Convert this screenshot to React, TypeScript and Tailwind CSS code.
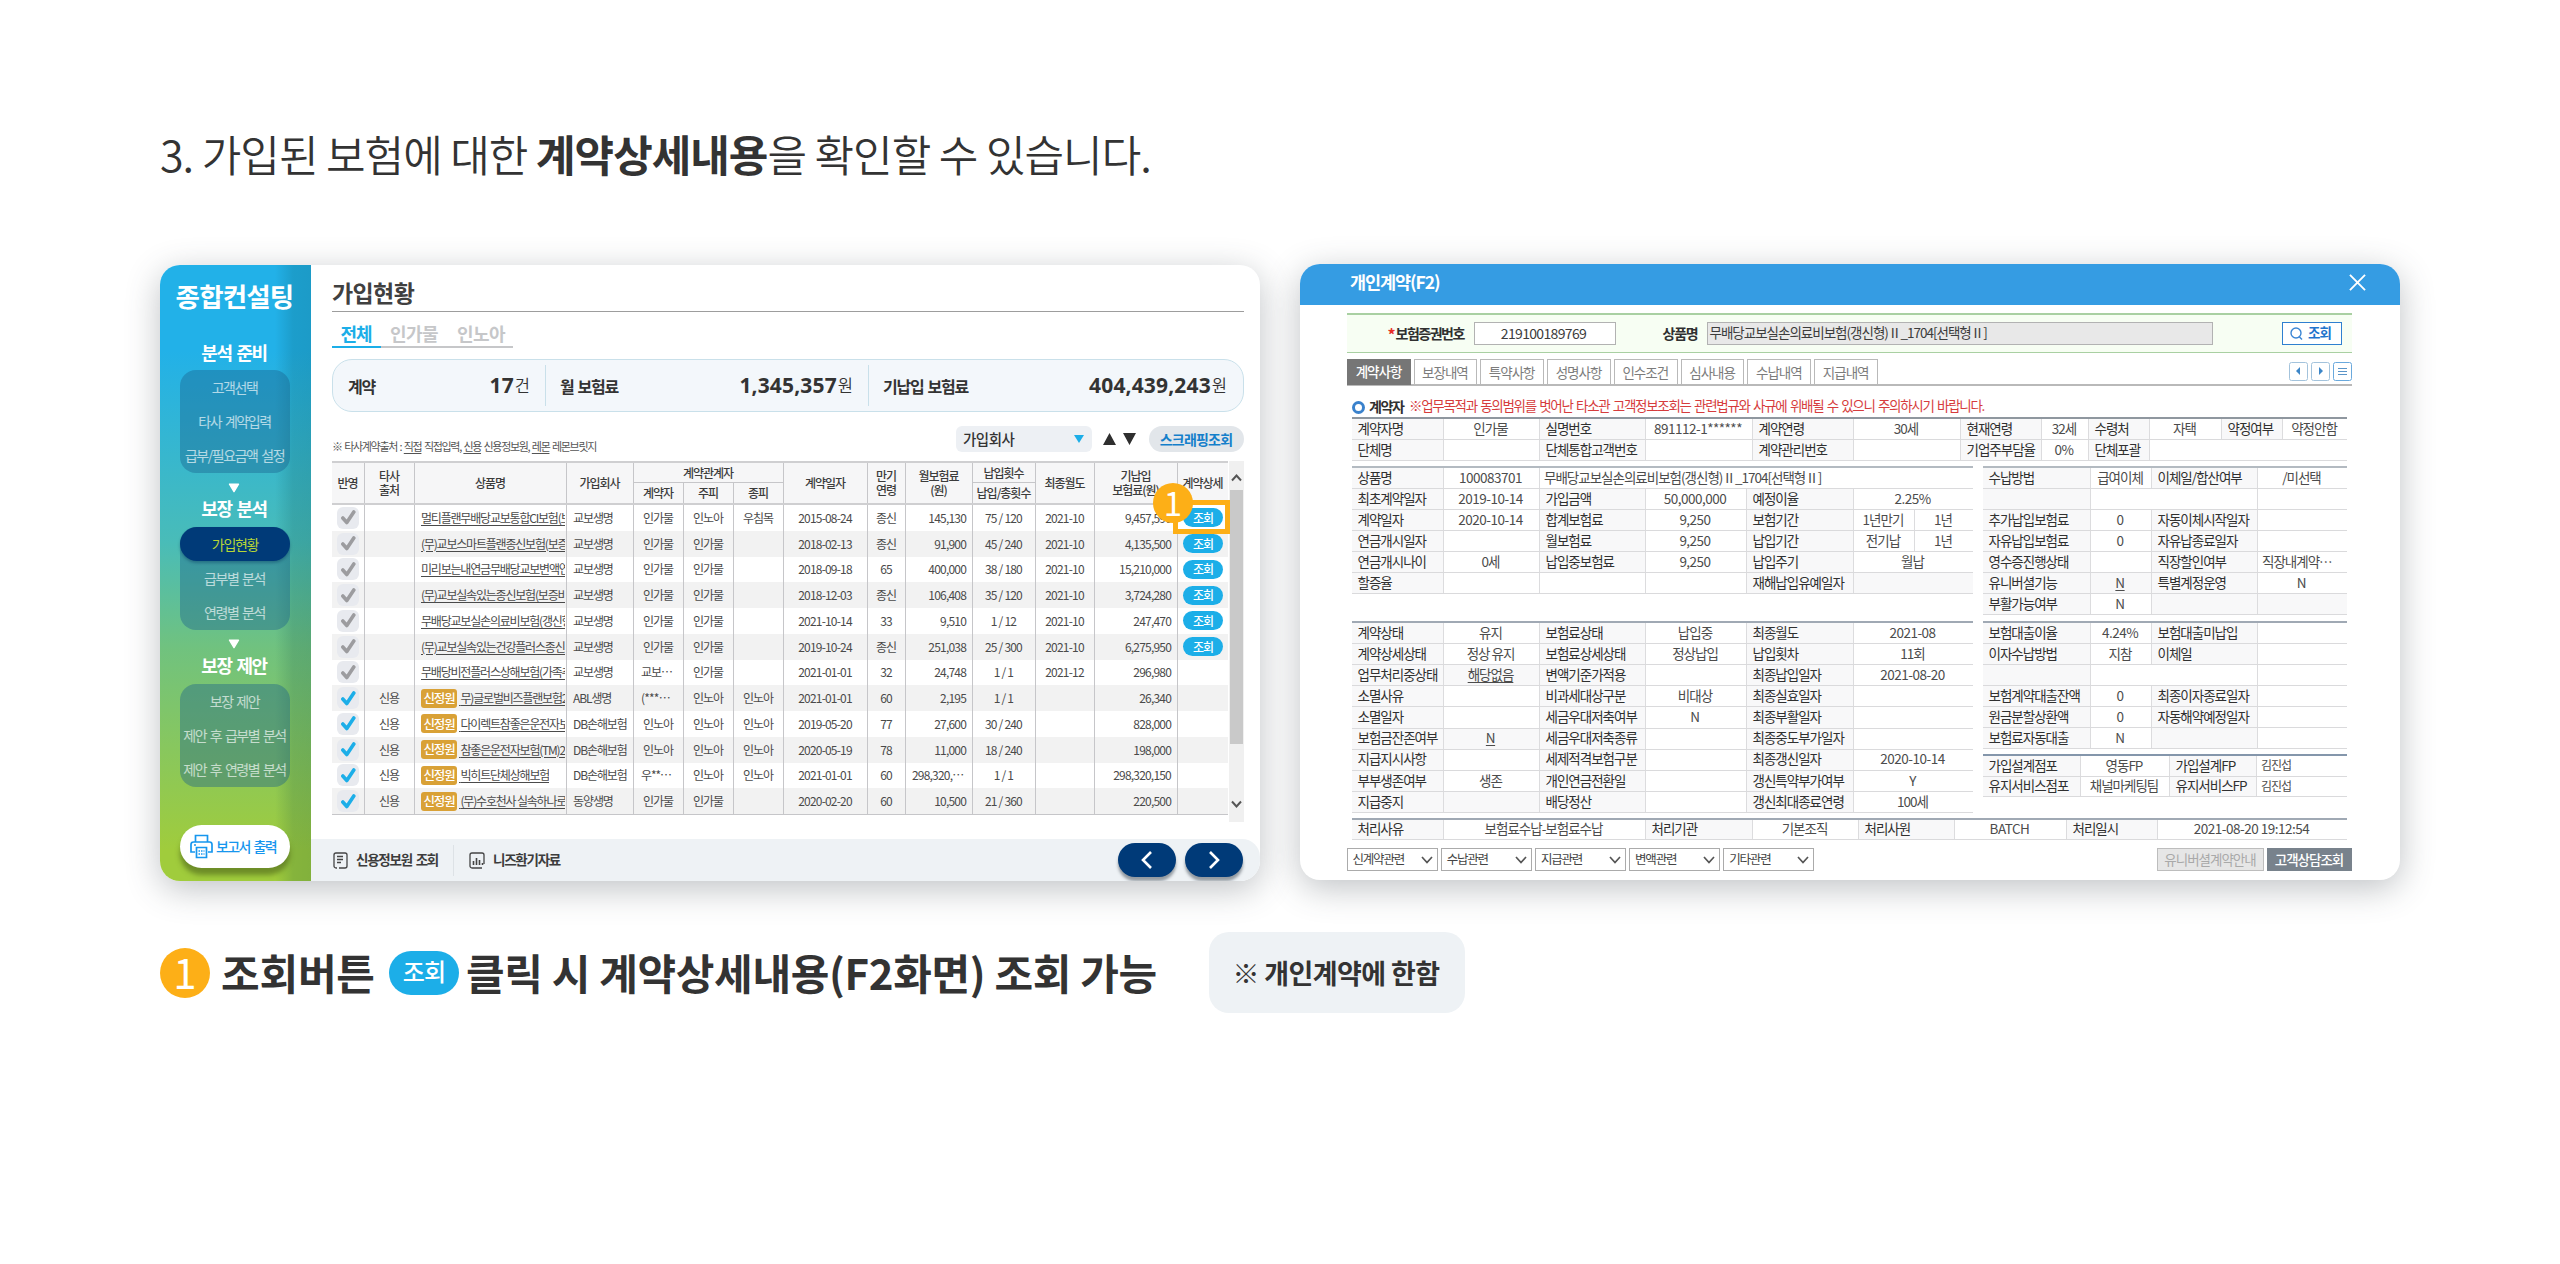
import React from "react";

const FONT = "font-['Noto_Sans_CJK_KR',sans-serif]";
const hasHangul = (s: string) => /[가-힣]/.test(s);

/* ---------- left panel ---------- */

function MenuGroup({ items, active }: { items: string[]; active?: number }) {
  return (
    <div className="mr-[21px] ml-5 grid h-[103px] grid-rows-3 overflow-visible rounded-[16px] bg-[#1a5f8c]/40 pr-[1px] [word-spacing:2px]">
      {items.map((t, i) =>
        i === active ? (
          <div key={t} className="-mr-[1px] flex items-center justify-center rounded-full bg-[#003a78] text-[14px] tracking-[-1.3px] text-[#b7d636] shadow-[0_2px_3px_rgba(0,40,80,.35)]">
            {t}
          </div>
        ) : (
          <div key={t} className="flex items-center justify-center whitespace-nowrap text-[14px] tracking-[-1.45px] text-white/65">
            {t}
          </div>
        )
      )}
    </div>
  );
}

const Down = () => (
  <svg className="mx-auto" width="12" height="10" viewBox="0 0 12 10">
    <path d="M1.5 1.2h9L6 8.6z" fill="#fff" stroke="#fff" strokeWidth="1.4" strokeLinejoin="round" />
  </svg>
);

function GroupTitle({ children }: { children: React.ReactNode }) {
  return <div className="flex h-[22px] items-center justify-center pr-[3px] text-[18px] font-bold tracking-[-1.5px] text-white [word-spacing:2.5px]">{children}</div>;
}

function Sidebar() {
  return (
    <aside className="relative flex w-[151px] shrink-0 flex-col bg-[linear-gradient(180deg,#22b1e8_0%,#22b1e8_14%,#49bcb8_45%,#70c27f_62%,#a0cc3c_95%)]">
      <div className="absolute inset-y-0 right-0 w-[36px] bg-[linear-gradient(90deg,rgba(0,60,60,0)_0%,rgba(0,60,60,.17)_50%,rgba(0,60,60,.19)_100%)]" />
      <div className="relative flex h-full flex-col">
        <div className="mt-[17px] flex h-[28px] items-center justify-center pr-[2px] text-[26.5px] font-bold tracking-[-0.8px] whitespace-nowrap text-white">종합컨설팅</div>
        <div className="mt-[31px]"><GroupTitle>분석 준비</GroupTitle></div>
        <div className="mt-[7px]"><MenuGroup items={["고객선택", "타사 계약입력", "급부/필요금액 설정"]} /></div>
        <div className="mt-[10px] h-[10px] pr-[3px]"><Down /></div>
        <div className="mt-[4px]"><GroupTitle>보장 분석</GroupTitle></div>
        <div className="mt-[8px]"><MenuGroup active={0} items={["가입현황", "급부별 분석", "연령별 분석"]} /></div>
        <div className="mt-[9px] h-[10px] pr-[3px]"><Down /></div>
        <div className="mt-[5px]"><GroupTitle>보장 제안</GroupTitle></div>
        <div className="mt-[8px]"><MenuGroup items={["보장 제안", "제안 후 급부별 분석", "제안 후 연령별 분석"]} /></div>
        <div className="mt-[38px] mr-[21px] ml-5 flex h-[43px] items-center rounded-full bg-white pl-[10px] text-[14px] font-medium tracking-[-1.6px] whitespace-nowrap text-[#1696ee] shadow-[0_7px_5px_rgba(60,80,20,.5)] [word-spacing:2px]">
          <svg width="23" height="25" viewBox="0 0 23 25" fill="none" stroke="#1696ee" strokeWidth="1.7" className="mr-[3px] shrink-0">
            <path d="M5.500 8V1.500h12V8M5 18H1V10.500a2.500 2.500 0 0 1 2.500-2.500h16a2.500 2.500 0 0 1 2.500 2.500V18h-4M6.500 13.500h10v10h-10zM4 11h2" />
            <path d="M8.500 17h6M8.500 20h6" strokeDasharray="1.500 1" />
          </svg>
          보고서 출력
        </div>
      </div>
    </aside>
  );
}

type Contract = {
  on?: boolean; badge?: boolean; name: string; co: string; a: string; b: string; c?: string;
  date: string; age: string; fee: string; cnt: string; last?: string; paid: string; btn?: boolean;
};

const KB = "교보생명";
const contracts: Contract[] = [
  { name: "멀티플랜무배당교보통합CI보험(보", co: KB, a: "인가물", b: "인노아", c: "우침목", date: "2015-08-24", age: "종신", fee: "145,130", cnt: "75 / 120", last: "2021-10", paid: "9,457,590", btn: true },
  { name: "(무)교보스마트플랜종신보험(보증", co: KB, a: "인가물", b: "인가물", date: "2018-02-13", age: "종신", fee: "91,900", cnt: "45 / 240", last: "2021-10", paid: "4,135,500", btn: true },
  { name: "미리보는내연금무배당교보변액연", co: KB, a: "인가물", b: "인가물", date: "2018-09-18", age: "65", fee: "400,000", cnt: "38 / 180", last: "2021-10", paid: "15,210,000", btn: true },
  { name: "(무)교보실속있는종신보험(보증비", co: KB, a: "인가물", b: "인가물", date: "2018-12-03", age: "종신", fee: "106,408", cnt: "35 / 120", last: "2021-10", paid: "3,724,280", btn: true },
  { name: "무배당교보실손의료비보험(갱신형", co: KB, a: "인가물", b: "인가물", date: "2021-10-14", age: "33", fee: "9,510", cnt: "1 / 12", last: "2021-10", paid: "247,470", btn: true },
  { name: "(무)교보실속있는건강플러스종신보", co: KB, a: "인가물", b: "인가물", date: "2019-10-24", age: "종신", fee: "251,038", cnt: "25 / 300", last: "2021-10", paid: "6,275,950", btn: true },
  { name: "무배당비전플러스상해보험(가족추", co: KB, a: "교보…", b: "인가물", date: "2021-01-01", age: "32", fee: "24,748", cnt: "1 / 1", last: "2021-12", paid: "296,980" },
  { on: true, badge: true, name: "무)글로벌비즈플랜보험2", co: "ABL생명", a: "(***…", b: "인노아", c: "인노아", date: "2021-01-01", age: "60", fee: "2,195", cnt: "1 / 1", paid: "26,340" },
  { on: true, badge: true, name: "다이렉트참좋은운전자보", co: "DB손해보험", a: "인노아", b: "인노아", c: "인노아", date: "2019-05-20", age: "77", fee: "27,600", cnt: "30 / 240", paid: "828,000" },
  { on: true, badge: true, name: "참좋은운전자보험(TM)2", co: "DB손해보험", a: "인노아", b: "인노아", c: "인노아", date: "2020-05-19", age: "78", fee: "11,000", cnt: "18 / 240", paid: "198,000" },
  { on: true, badge: true, name: "빅히트단체상해보험", co: "DB손해보험", a: "우**…", b: "인노아", c: "인노아", date: "2021-01-01", age: "60", fee: "298,320,…", cnt: "1 / 1", paid: "298,320,150" },
  { on: true, badge: true, name: "(무)수호천사 실속하나로", co: "동양생명", a: "인가물", b: "인가물", date: "2020-02-20", age: "60", fee: "10,500", cnt: "21 / 360", paid: "220,500" },
];

const GRID = "grid grid-cols-[32px_50px_152px_67px_50px_50px_50px_84px_38px_67px_63px_59px_83px_51px]";

function Td({ t = "", cls = "justify-center pr-px" }: { t?: string; cls?: string }) {
  return (
    <div className={`flex items-center border-l border-[#c6c6c9] whitespace-nowrap ${cls} ${hasHangul(t) ? "tracking-[-1.1px]" : "tracking-[-0.8px]"}`}>
      {t}
    </div>
  );
}

function Th({ children, cls = "row-span-2" }: { children?: React.ReactNode; cls?: string }) {
  return <div className={`flex items-center justify-center border-l border-[#c6c6c9] pr-px text-center whitespace-nowrap ${cls}`}>{children}</div>;
}

function Check({ on }: { on?: boolean }) {
  return (
    <div className="flex items-center justify-center">
      <div className="flex size-[22px] items-center justify-center rounded-[6px] bg-[#e8eaef]">
        <svg width="15" height="15" viewBox="0 0 15 15" fill="none" stroke={on ? "#1caee8" : "#9c9c9f"} strokeWidth="3.600">
          <path d="M1.800 8 5.800 12.500 12.800 2" strokeLinejoin="round" strokeLinecap="round" />
        </svg>
      </div>
    </div>
  );
}

function ContractTable() {
  return (
    <div className="flex h-[361px]">
      <div className="w-[896px] text-[12px] leading-none text-[#4a4a4a]">
        <div className={`${GRID} h-[44px] grid-rows-2 border-t-2 border-b-2 border-[#cfcfd1] bg-[#f6f6f7] text-[12px] leading-[14px] font-medium tracking-[-1px] text-[#3c3c3c]`}>
          <Th cls="row-span-2 border-l-0">반영</Th>
          <Th>타사<br />출처</Th>
          <Th>상품명</Th>
          <Th>가입회사</Th>
          <Th cls="col-span-3 border-b">계약관계자</Th>
          <Th>계약일자</Th>
          <Th>만기<br />연령</Th>
          <Th>월보험료<br />(원)</Th>
          <Th cls="border-b">납입횟수</Th>
          <Th>최종월도</Th>
          <Th>기납입<br />보험료(원)</Th>
          <Th>계약상세</Th>
          <Th cls="">계약자</Th>
          <Th cls="">주피</Th>
          <Th cls="">종피</Th>
          <Th cls="">납입/총횟수</Th>
        </div>
        <div className="grid h-[310px] auto-rows-fr border-b border-[#c6c6c9]">
          {contracts.map((r, i) => (
            <div key={i} className={`${GRID} ${i % 2 ? "bg-[#f2f2f2]" : "bg-white"}`}>
              <Check on={r.on} />
              <Td t={r.on ? "신용" : ""} />
              <div className="flex items-center overflow-hidden border-l border-[#c6c6c9] pr-px pl-[6px] tracking-[-1.2px] whitespace-nowrap">
                {r.badge && <span className="mr-[2px] flex h-[19px] w-[36px] shrink-0 items-center justify-center rounded-[3px] bg-[#d9a136] text-[12.5px] font-medium text-white">신정원</span>}
                <span className="overflow-hidden pt-1 pb-1 underline underline-offset-2">{r.badge && "\u00a0"}{r.name}</span>
              </div>
              <Td t={r.co} cls="pl-[6px]" />
              <Td t={r.a} cls={r.a.endsWith("…") ? "pl-[7px]" : "justify-center pr-px"} />
              <Td t={r.b} />
              <Td t={r.c} />
              <Td t={r.date} />
              <Td t={r.age} />
              <Td t={r.fee} cls={r.fee.endsWith("…") ? "pl-[6px]" : "justify-end pr-[6px]"} />
              <Td t={r.cnt} />
              <Td t={r.last} />
              <Td t={r.paid} cls="justify-end pr-[6px]" />
              <div className="relative flex items-center justify-center border-l border-[#c6c6c9]">
                {r.btn && <span className="flex h-[19px] w-[40px] items-center justify-center rounded-full bg-[#1caee8] text-[12px] font-medium tracking-[-1px] text-white">조회</span>}
                {i === 0 && (
                  <>
                    <span className="absolute -top-[5px] -left-[5px] z-10 h-[34px] w-[57px] border-[5px] border-[#fdaf17]" />
                    <span className="absolute -top-[22px] -left-[25px] z-20 flex size-[40px] items-center justify-center rounded-full bg-[#fdaf17] pb-[2px] text-[33px] text-white">1</span>
                  </>
                )}
              </div>
            </div>
          ))}
        </div>
      </div>
      <div className="ml-[1px] flex w-[15px] flex-col items-center bg-[#f0f0f0]">
        <svg className="mt-[13px]" width="11" height="8" viewBox="0 0 11 8" fill="none" stroke="#555" strokeWidth="2"><path d="M1 6.500 5.500 1.500 10 6.500" /></svg>
        <div className="mt-[8px] h-[254px] w-[13px] bg-[#c9c9c9]" />
        <svg className="mt-[56px]" width="11" height="8" viewBox="0 0 11 8" fill="none" stroke="#555" strokeWidth="2"><path d="M1 1.500 5.500 6.500 10 1.500" /></svg>
      </div>
    </div>
  );
}

function Stat({ label, value, unit, cls }: { label: string; value: string; unit: string; cls: string }) {
  return (
    <div className={`flex h-[41px] items-center justify-between ${cls}`}>
      <span className="text-[16px] font-bold tracking-[-1.2px] text-[#333] [word-spacing:1.5px]">{label}</span>
      <span className="flex items-center text-[#333]">
        <span className="font-['Noto_Sans',sans-serif] text-[21px] font-bold tracking-[0.15px]">{value}</span>
        <span className="ml-px text-[16.5px] font-[350]">{unit}</span>
      </span>
    </div>
  );
}

function StatusPanel() {
  return (
    <section className="flex h-[616px] w-[1100px] overflow-hidden rounded-[20px] bg-white shadow-[0_8px_34px_rgba(60,70,80,.33)]">
      <Sidebar />
      <div className="flex flex-1 flex-col">
        <div className="ml-[21px] w-[912px]">
          <div className="flex h-[47px] items-center border-b border-[#9d9d9d] pt-[11px] text-[23px] leading-none font-bold tracking-[-0.6px] text-[#404040]"><span className="-mt-[3px]">가입현황</span></div>
          <div className="mt-[8px] flex h-[28px] text-[18px] leading-none font-bold tracking-[-1px] text-[#c6c7c9]">
            <div className="flex w-[49px] items-center justify-center border-b-2 border-[#1caee8] pr-[1px] text-[#1caee8]">전체</div>
            <div className="flex w-[132px] items-center justify-between border-b-2 border-[#c6c7c9] pr-[8px] pl-[9px] text-[18px] tracking-[-0.6px]"><span>인가물</span><span>인노아</span></div>
          </div>
          <div className="mt-[11px] flex h-[53px] items-center rounded-[20px] border border-[#c9e0ea] bg-[#f3f7fb] leading-none">
            <Stat label="계약" value="17" unit="건" cls="w-[212px] pl-[15px] pr-[15px]" />
            <Stat label="월 보험료" value="1,345,357" unit="원" cls="w-[323px] border-l border-[#c9e0ea] pl-[14px] pr-[15px]" />
            <Stat label="기납입 보험료" value="404,439,243" unit="원" cls="flex-1 border-l border-[#c9e0ea] pl-[14px] pr-[16px]" />
          </div>
          <div className="mt-[14px] flex h-[26px] items-center leading-none">
            <div className="mt-[14px] text-[11px] tracking-[-1.3px] whitespace-nowrap text-[#555] [word-spacing:1.3px]">※ 타사계약출처 : <u className="underline-offset-2">직접</u> 직접입력, <u className="underline-offset-2">신용</u> 신용정보원, <u className="underline-offset-2">레몬</u> 레몬브릿지</div>
            <div className="ml-auto flex h-full w-[136px] items-center justify-between rounded-[6px] bg-[#edf0f4] pr-[8px] pl-[7px] text-[14.5px] font-medium tracking-[-0.5px] text-[#333]">
              가입회사
              <svg width="10" height="8"><path d="M0 0h10L5 8z" fill="#1caee8" /></svg>
            </div>
            <svg className="ml-[11px]" width="33" height="12"><path d="M0 12h13L6.500 0zM20 0h13l-6.500 12z" fill="#2f2f2f" /></svg>
            <div className="ml-[13px] flex h-full w-[95px] items-center justify-center rounded-full bg-[#e2e6ea] pr-[1px] text-[14px] font-bold tracking-[-0.8px] text-[#147fca]">스크래핑조회</div>
          </div>
          <div className="mt-[9px]"><ContractTable /></div>
        </div>
        <div className="mt-auto flex h-[42px] items-center rounded-tr-[18px] bg-[#eef2f5] pl-[22px] text-[13.5px] leading-none font-bold tracking-[-1.25px] text-[#3c3c3c] [word-spacing:2px]">
          <svg width="15" height="17" viewBox="0 0 15 17" fill="none" stroke="#444" strokeWidth="1.300" className="mr-[8px]">
            <path d="M4 16H3a2 2 0 0 1-2-2V3a2 2 0 0 1 2-2h9a2 2 0 0 1 2 2v11a2 2 0 0 1-2 2H6M4 4.500h6M4 7.500h6M4 10.500h4" />
          </svg>
          <span className="w-[97px] whitespace-nowrap">신용정보원 조회</span>
          <span className="h-[31px] w-px bg-[#dde2e6]" />
          <svg width="17" height="17" viewBox="0 0 17 17" fill="none" stroke="#444" strokeWidth="1.300" className="mr-[7px] ml-[15px]">
            <path d="M13 16H3a2 2 0 0 1-2-2V3a2 2 0 0 1 2-2h10a2 2 0 0 1 2 2v9" />
            <path d="M4.500 13V9M7.500 13V6M10.500 13V8M13.500 13V11" strokeWidth="1.600" />
          </svg>
          니즈환기자료
          <div className="ml-auto flex gap-[9px] pr-[17px]">
            {["M10 1 2 9l8 8", "M2 1l8 8-8 8"].map((d) => (
              <span key={d} className="flex h-[34px] w-[58px] items-center justify-center rounded-full bg-[#003a78] shadow-[0_4px_3px_rgba(60,70,80,.5)]">
                <svg width="12" height="18" viewBox="0 0 12 18" fill="none" stroke="#fff" strokeWidth="2.600"><path d={d} /></svg>
              </span>
            ))}
          </div>
        </div>
      </div>
    </section>
  );
}

/* ---------- right panel ---------- */

type CellSpec = { t: string; s?: number; l?: boolean; u?: boolean; left?: boolean; sm?: boolean };
type Cell = string | CellSpec;
const SPAN: Record<number, string> = { 1: "", 2: "col-span-2", 3: "col-span-3", 4: "col-span-4", 5: "col-span-5" };

/* Strings that begin with "#" are label cells. */
function Rows({ cols, rows, cls }: { cols: string; rows: Cell[][]; cls: string }) {
  return (
    <div className={`grid auto-rows-fr border-t-2 text-[13.5px] leading-none text-[#4c4c4c] ${cls}`}>
      {rows.map((r, i) => (
        <div key={i} className={`grid border-b border-[#dadadc] ${cols}`}>
          {r.map((c, j) => {
            const label = typeof c === "string" && c.startsWith("#");
            const cell: CellSpec = typeof c === "string" ? { t: label ? c.slice(1) : c } : c;
            return (
              <div
                key={j}
                className={`flex items-center pb-px whitespace-nowrap ${j ? "border-l border-[#dcdcde]" : ""} ${SPAN[cell.s ?? 1]} ${label ? "bg-[#f8f8f9] pl-[5.5px] text-[#303030]" : cell.left ? "pl-[4px]" : "justify-center pr-[2px]"} ${cell.l ? "bg-[#f8f8f9]" : ""} ${cell.u ? "underline underline-offset-2" : ""} ${cell.sm ? "text-[12px]" : ""} ${hasHangul(cell.t) ? "tracking-[-1px]" : "tracking-[-0.5px]"}`}
              >
                {cell.t}
              </div>
            );
          })}
        </div>
      ))}
    </div>
  );
}

const PRODUCT = "무배당교보실손의료비보험(갱신형)Ⅱ_1704[선택형Ⅱ]";
const W_LEFT = "grid-cols-[91px_96px_106px_101px_107px_61px_59px]";
const W_RIGHT = "grid-cols-[107px_61px_106px_90px]";
const e2: Cell = { t: "", s: 2 };
const v2 = (t: string): Cell => ({ t, s: 2 });

const person: Cell[][] = [
  ["#계약자명", "인가물", "#실명번호", "891112-1******", "#계약연령", "30세", "#현재연령", "32세", "#수령처", "자택", "#약정여부", "약정안함"],
  ["#단체명", "", "#단체통합고객번호", "", "#계약관리번호", "", "#기업주부담율", "0%", "#단체포괄", { t: "", s: 3 }],
];
const product: Cell[][] = [
  ["#상품명", "100083701", { t: PRODUCT, s: 5, left: true }],
  ["#최초계약일자", "2019-10-14", "#가입금액", "50,000,000", "#예정이율", v2("2.25%")],
  ["#계약일자", "2020-10-14", "#합계보험료", "9,250", "#보험기간", "1년만기", "1년"],
  ["#연금개시일자", "", "#월보험료", "9,250", "#납입기간", "전기납", "1년"],
  ["#연금개시나이", "0세", "#납입중보험료", "9,250", "#납입주기", v2("월납")],
  ["#할증율", "", "", "", "#재해납입유예일자", { t: "", s: 2, l: true }],
];
const payment: Cell[][] = [
  ["#수납방법", "급여이체", "#이체일/합산여부", "/미선택"],
  ["#", e2, ""],
  ["#추가납입보험료", "0", "#자동이체시작일자", ""],
  ["#자유납입보험료", "0", "#자유납종료일자", ""],
  ["#영수증진행상태", "", "#직장할인여부", { t: "직장내계약…", left: true }],
  ["#유니버셜기능", { t: "N", u: true, l: true }, "#특별계정운영", "N"],
  ["#부활가능여부", "N", "#", "#"],
];
const state: Cell[][] = [
  ["#계약상태", "유지", "#보험료상태", "납입중", "#최종월도", v2("2021-08")],
  ["#계약상세상태", "정상 유지", "#보험료상세상태", "정상납입", "#납입횟차", v2("11회")],
  ["#업무처리중상태", { t: "해당없음", u: true, l: true }, "#변액기준가적용", "", "#최종납입일자", v2("2021-08-20")],
  ["#소멸사유", "", "#비과세대상구분", "비대상", "#최종실효일자", e2],
  ["#소멸일자", "", "#세금우대저축여부", "N", "#최종부활일자", e2],
  ["#보험금잔존여부", { t: "N", u: true, l: true }, "#세금우대저축종류", "", "#최종중도부가일자", e2],
  ["#지급지시사항", "", "#세제적격보험구분", "", "#최종갱신일자", v2("2020-10-14")],
  ["#부부생존여부", "생존", "#개인연금전환일", "", "#갱신특약부가여부", v2("Y")],
  ["#지급중지", "#", "#배당정산", "", "#갱신최대종료연령", v2("100세")],
];
const loan: Cell[][] = [
  ["#보험대출이율", "4.24%", "#보험대출미납입", ""],
  ["#이자수납방법", "지참", "#이체일", ""],
  ["#", e2, ""],
  ["#보험계약대출잔액", "0", "#최종이자종료일자", ""],
  ["#원금분할상환액", "0", "#자동해약예정일자", ""],
  ["#보험료자동대출", "N", "#", ""],
];
const planner: Cell[][] = [
  ["#가입설계점포", "영동FP", "#가입설계FP", { t: "김진섭", left: true, sm: true }],
  ["#유지서비스점포", "채널마케팅팀", "#유지서비스FP", { t: "김진섭", left: true, sm: true }],
];
const process: Cell[][] = [
  ["#처리사유", "보험료수납-보험료수납", "#처리기관", "기본조직", "#처리사원", "BATCH", "#처리일시", "2021-08-20 19:12:54"],
];

function DetailPanel() {
  return (
    <section className="flex h-[616px] w-[1100px] flex-col overflow-hidden rounded-[20px] bg-white leading-none shadow-[0_8px_34px_rgba(60,70,80,.33)]">
      <div className="flex h-[41px] shrink-0 items-center justify-between bg-[#359ce3] pr-[34px] pb-[5px] pl-[50px] text-[17.5px] font-bold tracking-[-1.1px] text-white">
        개인계약(F2)
        <svg width="17" height="17" viewBox="0 0 18 18" stroke="#fff" strokeWidth="2"><path d="M1 1l16 16M17 1 1 17" /></svg>
      </div>
      <div className="ml-[46.5px] w-[1005px]">
        <div className="mt-[8px] flex h-[40px] items-center border-t-2 border-b border-[#a9d0a2] bg-[#f7fef3] text-[13.5px] tracking-[-1px] text-[#3c3c3c]">
          <span className="ml-[41px] w-[8px] text-[16px] font-bold text-[#e8302a]">*</span>
          <span className="w-[78px] pb-px text-[14px] font-bold tracking-[-1.5px] text-[#303030]">보험증권번호</span>
          <span className="flex h-[23px] w-[142px] items-center justify-center border border-[#b2b2b2] bg-white pr-[2px] pb-px text-[14px] tracking-[-0.65px]">219100189769</span>
          <span className="ml-[47px] w-[44px] pb-px text-[14px] font-bold tracking-[-1.2px] text-[#303030]">상품명</span>
          <span className="flex h-[23px] w-[506px] items-center border border-[#b2b2b2] bg-[#e8e8e8] pb-px pl-[2px]">{PRODUCT}</span>
          <span className="mr-[10px] ml-auto flex h-[23px] w-[60px] items-center justify-center gap-[5px] border border-[#2f80d0] bg-white pr-[2px] font-bold text-[#1f74cc]">
            <svg width="13" height="13" viewBox="0 0 13 13" fill="none" stroke="#3c86d4" strokeWidth="1.400"><circle cx="6" cy="6" r="5" /><path d="M9 9.500l3 3" /></svg>
            <span className="pb-px">조회</span>
          </span>
        </div>
        <div className="mt-[6px] flex h-[27px] items-start gap-[3px] border-b-2 border-[#b9b9b9] text-[13.5px] tracking-[-1px]">
          <div className="flex h-[26px] w-[64px] items-center justify-center bg-[#767676] font-medium text-white">계약사항</div>
          {["보장내역", "특약사항", "성명사항", "인수조건", "심사내용", "수납내역", "지급내역"].map((t) => (
            <div key={t} className="flex h-[26px] w-[63.8px] items-center justify-center border border-b-0 border-[#b9b9b9] pr-px text-[#7c7c7c]">{t}</div>
          ))}
          <div className="mt-[3px] ml-auto flex gap-[3px]">
            {["M11 5v8L7 9z", "M8 5v8l4-4z", ""].map((d, i) => (
              <svg key={i} width="19" height="19" viewBox="0 0 19 19" fill="none">
                <rect x=".5" y=".5" width="18" height="18" rx="2" stroke={i === 2 ? "#6aa9dd" : "#a3c3dc"} />
                {d ? <path d={d} fill="#3c86c8" /> : <path d="M5 6.500h9M5 9.500h9M5 12.500h9" stroke="#5b95c8" strokeWidth="1.200" />}
              </svg>
            ))}
          </div>
        </div>
        <div className="flex h-[31px] items-center pt-[8px] pl-[5.5px] text-[13.5px]">
          <span className="mt-[4px] size-[13px] rounded-full border-[3.5px] border-[#3a82cc]" />
          <span className="ml-[4px] w-[40px] text-[14px] font-bold tracking-[-1.4px] text-[#303030]">계약자</span>
          <span className="tracking-[-1.3px] whitespace-nowrap text-[#d63c3c] [word-spacing:1.7px]">※업무목적과 동의범위를 벗어난 타소관 고객정보조회는 관련법규와 사규에 위배될 수 있으니 주의하시기 바랍니다.</span>
        </div>
        <div className="ml-[5.5px] w-[995px]">
          <Rows cls="h-[44px] border-[#8f979f]" cols="grid-cols-[91px_96px_106px_107px_101px_107px_81px_47px_61px_72px_61px_65px]" rows={person} />
          <div className="mt-[5px] flex items-start justify-between">
            <div className="w-[621px]">
              <Rows cls="h-[128px] border-[#b3bac1]" cols={W_LEFT} rows={product} />
              <div className="mt-[27px]"><Rows cls="h-[192px] border-[#a0a9b4]" cols={W_LEFT} rows={state} /></div>
            </div>
            <div className="w-[364px]">
              <Rows cls="h-[149px] border-[#b3bac1]" cols={W_RIGHT} rows={payment} />
              <div className="mt-[6px]"><Rows cls="h-[128px] border-[#a0a9b4]" cols={W_RIGHT} rows={loan} /></div>
              <div className="mt-[5px]"><Rows cls="h-[43px] border-[#8496ab]" cols="grid-cols-[97px_89px_87px_91px]" rows={planner} /></div>
            </div>
          </div>
          <div className="mt-[5px]"><Rows cls="h-[22px] border-[#a0a9b4]" cols="grid-cols-[91px_202px_107px_106px_96px_112px_91px_190px]" rows={process} /></div>
        </div>
        <div className="mt-[8px] flex h-[23px] gap-[3px] text-[12.5px] tracking-[-1.2px] text-[#444]">
          {["신계약관련", "수납관련", "지급관련", "변액관련", "기타관련"].map((t) => (
            <div key={t} className="flex w-[91.2px] items-center justify-between border border-[#ababab] pr-[4px] pl-[5px]">
              {t}
              <svg width="12" height="8" viewBox="0 0 12 8" fill="none" stroke="#555" strokeWidth="1.700"><path d="M1 1l5 5.500L11 1" /></svg>
            </div>
          ))}
          <div className="ml-auto flex w-[107px] items-center justify-center border border-[#bdbdbd] bg-[#e6e6e6] text-[13.500px] tracking-[-1px] text-[#a9a9a9]">유니버셜계약안내</div>
          <div className="flex w-[85px] items-center justify-center bg-[#78828c] text-[13.500px] font-medium tracking-[-1px] text-white">고객상담조회</div>
        </div>
      </div>
    </section>
  );
}

export default function App() {
  return (
    <main className={`h-[1264px] w-[2560px] overflow-hidden bg-white pl-[160px] ${FONT} text-[#333]`}>
      <h1 className="flex h-[264px] items-start pt-[128px] text-[43px] leading-[50px] font-[350] tracking-[-1px] whitespace-pre">
        <span>3. 가입된 보험에 대한 <b className="font-bold">계약상세내용</b>을 확인할 수 있습니다.</span>
      </h1>
      <div className="flex items-start gap-[40px]">
        <div className="pt-px"><StatusPanel /></div>
        <DetailPanel />
      </div>
      <div className="mt-[51px] flex h-[81px] items-center leading-none">
        <span className="flex size-[50px] items-center justify-center rounded-full bg-[#fdaf17] pb-[3px] text-[42px] text-white">1</span>
        <span className="ml-[11px] w-[168px] pb-[2px] text-[42px] font-bold tracking-[-0.2px] whitespace-nowrap">조회버튼</span>
        <span className="flex h-[44px] w-[70px] items-center justify-center rounded-full bg-[#1caee8] pb-[4px] text-[24px] font-medium tracking-[-0.8px] text-white">조회</span>
        <span className="ml-[7px] w-[743px] pb-[2px] text-[42px] font-bold tracking-[-0.35px] whitespace-nowrap">클릭 시 계약상세내용(F2화면) 조회 가능</span>
        <span className="flex h-[81px] w-[256px] items-center justify-center rounded-[20px] bg-[#eef2f5] pr-[2px] text-[27px] font-bold tracking-[-0.6px] whitespace-nowrap">※ 개인계약에 한함</span>
      </div>
    </main>
  );
}
